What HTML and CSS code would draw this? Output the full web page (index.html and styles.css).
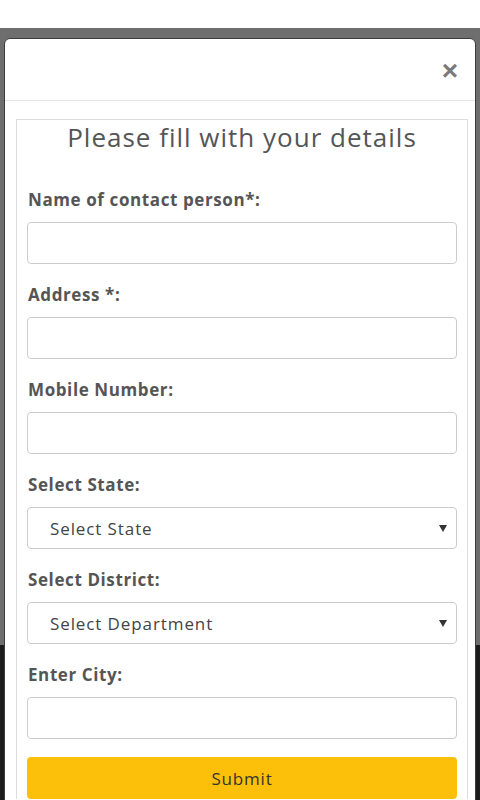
FILE: index.html
```html
<!DOCTYPE html>
<html lang="en">

<head>
    <meta charset="UTF-8">
    <meta name="viewport" content="width=device-width, initial-scale=1.0">
    <title>Contact Details</title>
    <link rel="stylesheet" href="styles.css">
</head>

<body>
    <div class="top-strip"></div>

    <div class="backdrop">
        <div class="modal">
            <div class="modal-header">
                <button class="close" type="button">&times;</button>
            </div>

            <div class="modal-body">
                <!-- Details form -->
                <form class="details-box">
                    <h3 class="form-title">Please fill with your details</h3>

                    <div class="field">
                        <label for="name">Name of contact person*:</label>
                        <input type="text" id="name">
                    </div>

                    <div class="field">
                        <label for="address">Address *:</label>
                        <input type="text" id="address">
                    </div>

                    <div class="field">
                        <label for="mobile">Mobile Number:</label>
                        <input type="text" id="mobile">
                    </div>

                    <div class="field">
                        <label for="state">Select State:</label>
                        <div class="select-wrap">
                            <select id="state">
                                <option>Select State</option>
                            </select>
                        </div>
                    </div>

                    <div class="field">
                        <label for="district">Select District:</label>
                        <div class="select-wrap">
                            <select id="district">
                                <option>Select Department</option>
                            </select>
                        </div>
                    </div>

                    <div class="field">
                        <label for="city">Enter City:</label>
                        <input type="text" id="city">
                    </div>

                    <button type="submit" class="submit-btn">Submit</button>
                </form>
            </div>
        </div>
    </div>
</body>

</html>
```

FILE: styles.css
```css
body {
    margin: 0;
    padding: 0;
    font-family: "Open Sans", "Noto Sans", sans-serif;
    background-color: #1c1c1c;
    height: 800px;
    overflow: hidden;
}

.top-strip {
    height: 28px;
    background-color: #ffffff;
}

.backdrop {
    background: linear-gradient(to bottom, #6e6e6e 0, #6e6e6e 617px, #1c1c1c 617px);
    height: 772px;
    padding: 10px 4px 0 4px;
    box-sizing: border-box;
}

.modal {
    background-color: #ffffff;
    border: 1px solid #3c3c3c;
    border-radius: 6px;
    height: 800px;
}

.modal-header {
    height: 61px;
    border-bottom: 1px solid #e5e5e5;
    display: flex;
    justify-content: flex-end;
    align-items: center;
    padding: 0 17px;
}

.close {
    background: none;
    border: none;
    padding: 0;
    font-family: "Liberation Sans", sans-serif;
    font-size: 28px;
    font-weight: bold;
    color: #7a7a7a;
    line-height: 1;
    margin-top: 2px;
}

.modal-body {
    padding: 18px 7px 0 11px;
}

.details-box {
    border: 1px solid #dddddd;
    border-bottom: none;
    padding: 0 10px;
    display: flex;
    flex-direction: column;
}

.form-title {
    margin: 0 0 35px 0;
    text-align: center;
    font-size: 26px;
    font-weight: normal;
    line-height: 34px;
    color: #555555;
    letter-spacing: 1px;
}

.field {
    display: flex;
    flex-direction: column;
    margin-bottom: 20px;
}

label {
    font-size: 17px;
    font-weight: bold;
    line-height: 22px;
    color: #555555;
    margin-bottom: 11px;
    padding-left: 1px;
    letter-spacing: 0.6px;
}

input,
select {
    height: 42px;
    box-sizing: border-box;
    border: 1px solid #cccccc;
    border-radius: 4px;
    background-color: #ffffff;
    font-family: "Open Sans", "Noto Sans", sans-serif;
    font-size: 16px;
    width: 100%;
    margin: 0;
}

.select-wrap {
    position: relative;
}

select {
    appearance: none;
    -webkit-appearance: none;
    padding: 0 22px;
    color: #444444;
    font-size: 17px;
    letter-spacing: 0.9px;
}

/* little dropdown arrow */
.select-wrap::after {
    content: "";
    position: absolute;
    right: 10px;
    top: 18px;
    border-left: 4px solid transparent;
    border-right: 4px solid transparent;
    border-top: 7px solid #333333;
    pointer-events: none;
}

.submit-btn {
    height: 42px;
    margin-top: -2px;
    background-color: #fdc00a;
    border: none;
    border-radius: 4px;
    font-family: "Open Sans", "Noto Sans", sans-serif;
    font-size: 17px;
    color: #333333;
    letter-spacing: 0.8px;
}
```
